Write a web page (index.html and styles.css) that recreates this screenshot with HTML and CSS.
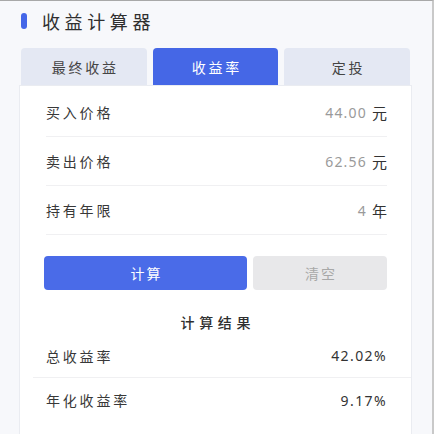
FILE: index.html
```html
<!DOCTYPE html>
<html lang="zh-CN">
<head>
<meta charset="utf-8">
<title>收益计算器</title>
<link rel="stylesheet" href="styles.css">
</head>
<body>
<div class="frame">
  <div class="main">
    <header class="header">
      <span class="bar"></span>
      <h1 class="title">收益计算器</h1>
    </header>
    <nav class="tabs">
      <div class="tab">最终收益</div>
      <div class="tab active">收益率</div>
      <div class="tab">定投</div>
    </nav>
    <section class="card">
      <div class="fields">
        <div class="row">
          <span class="label">买入价格</span>
          <span class="value"><span class="num">44.00</span><span class="unit">元</span></span>
        </div>
        <div class="row">
          <span class="label">卖出价格</span>
          <span class="value"><span class="num">62.56</span><span class="unit">元</span></span>
        </div>
        <div class="row">
          <span class="label">持有年限</span>
          <span class="value"><span class="num">4</span><span class="unit">年</span></span>
        </div>
      </div>
      <div class="actions">
        <button class="btn primary">计算</button>
        <button class="btn ghost">清空</button>
      </div>
      <h2 class="result-title">计算结果</h2>
      <div class="results">
        <div class="result-row">
          <span class="label">总收益率</span>
          <span class="result-value">42.02%</span>
        </div>
        <div class="result-row">
          <span class="label">年化收益率</span>
          <span class="result-value">9.17%</span>
        </div>
      </div>
    </section>
  </div>
</div>
</body>
</html>
```

FILE: styles.css
```css
* { box-sizing: border-box; }
html, body { margin: 0; padding: 0; }
body {
  width: 434px;
  height: 434px;
  overflow: hidden;
  background: #f7f8fb;
  font-family: "Noto Sans CJK SC", "Noto Sans", sans-serif;
  color: #333;
}
.frame {
  width: 434px;
  height: 434px;
  border-top: 1px solid #a8a8a8;
  border-right: 2px solid #c9c9c9;
  overflow: hidden;
}
.main {
  margin-left: 19px;
  width: 393px;
  display: flex;
  flex-direction: column;
  height: 433px;
}
.header {
  display: flex;
  align-items: center;
  padding: 8px 0 0 2px;
  height: 32px;
  margin-bottom: 15px;
}
.bar {
  width: 6px;
  height: 16px;
  border-radius: 3px;
  background: #4466e8;
}
.title {
  margin: 0 0 0 15px;
  font-size: 18px;
  font-weight: 400;
  line-height: 24px;
  letter-spacing: 4.6px;
  color: #2f2f2f;
}
.tabs {
  display: flex;
  gap: 6px;
  margin: 0 2px;
  height: 37px;
}
.tab {
  flex: 1;
  display: flex;
  align-items: center;
  justify-content: center;
  padding-left: 2.8px;
  background: #e4e8f3;
  border-radius: 4px 4px 0 0;
  font-size: 14px;
  letter-spacing: 2.8px;
  color: #444;
}
.tab.active {
  background: #4567e6;
  color: #fff;
}
.card {
  flex: 1;
  background: #fff;
  border: 1px solid #eaecf1;
  border-bottom: none;
}
.fields {
  padding: 2px 24px 0 26px;
}
.row {
  display: flex;
  align-items: center;
  justify-content: space-between;
  height: 49px;
  border-bottom: 1px solid #f0f0f2;
}
.label {
  font-size: 14px;
  letter-spacing: 2.8px;
  color: #383838;
}
.value {
  display: flex;
  align-items: center;
}
.num {
  font-family: "Noto Sans", sans-serif;
  font-size: 14px;
  letter-spacing: 1.2px;
  color: #9a9a9a;
}
.unit {
  margin-left: 5px;
  font-size: 15px;
  color: #333;
}
.actions {
  display: flex;
  gap: 6px;
  margin-top: 21px;
  padding-left: 24px;
}
.btn {
  height: 34px;
  border: none;
  border-radius: 4px;
  font-family: "Noto Sans CJK SC", "Noto Sans", sans-serif;
  font-size: 14px;
  letter-spacing: 2px;
  padding: 0 0 0 2px;
}
.btn.primary {
  width: 203px;
  background: #4a6be8;
  color: #fff;
}
.btn.ghost {
  width: 134px;
  background: #e8e8ea;
  color: #a8a8a8;
}
.result-title {
  margin: 20px 0 0;
  line-height: 24px;
  text-align: center;
  font-size: 14px;
  font-weight: 500;
  letter-spacing: 4.7px;
  padding-left: 4.7px;
  color: #2f2f2f;
}
.results {
  margin-left: 13px;
}
.result-row {
  display: flex;
  align-items: center;
  justify-content: space-between;
  height: 44px;
  padding: 0 24px 0 13px;
}
.result-row:first-child {
  border-bottom: 1px solid #f0f0f2;
}
.result-value {
  font-family: "Noto Sans", sans-serif;
  font-size: 14px;
  letter-spacing: 1.4px;
  color: #333;
}
```
